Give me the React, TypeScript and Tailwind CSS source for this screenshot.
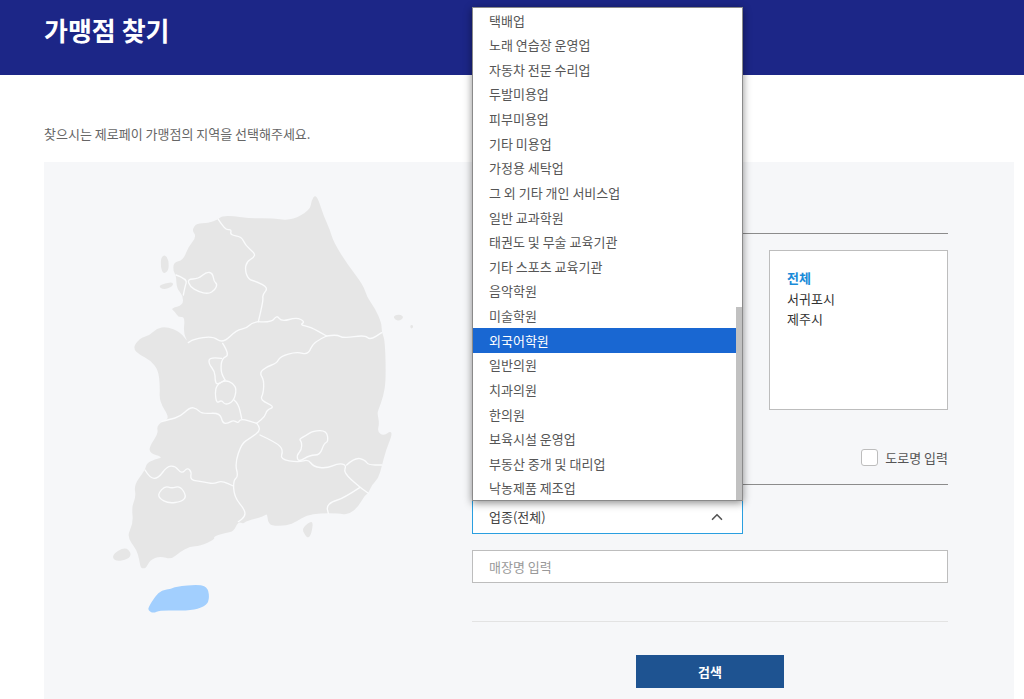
import React from 'react'
import { ChevronUp } from 'lucide-react'

const OPTIONS = [
  '택배업', '노래 연습장 운영업', '자동차 전문 수리업', '두발미용업', '피부미용업', '기타 미용업', '가정용 세탁업',
  '그 외 기타 개인 서비스업', '일반 교과학원', '태권도 및 무술 교육기관', '기타 스포츠 교육기관', '음악학원', '미술학원',
  '외국어학원', '일반의원', '치과의원', '한의원', '보육시설 운영업', '부동산 중개 및 대리업', '낙농제품 제조업',
]

type Pt = [number, number]

// rounds a list of points into a soft outline (midpoint quadratic)
function soft(pts: Pt[], closed = false) {
  if (!closed) {
    let d = `M${pts[0][0]} ${pts[0][1]}`
    for (let i = 1; i < pts.length - 1; i++) {
      const mx = (pts[i][0] + pts[i + 1][0]) / 2
      const my = (pts[i][1] + pts[i + 1][1]) / 2
      d += `Q${pts[i][0]} ${pts[i][1]} ${mx} ${my}`
    }
    const last = pts[pts.length - 1]
    return d + `L${last[0]} ${last[1]}`
  }
  const n = pts.length
  let d = `M${(pts[n - 1][0] + pts[0][0]) / 2} ${(pts[n - 1][1] + pts[0][1]) / 2}`
  for (let i = 0; i < n; i++) {
    const b = pts[(i + 1) % n]
    d += `Q${pts[i][0]} ${pts[i][1]} ${(pts[i][0] + b[0]) / 2} ${(pts[i][1] + b[1]) / 2}`
  }
  return d + 'Z'
}

// the lower half was measured from y=400, this moves it under the upper half
const low = (pts: Pt[]): Pt[] => pts.map(([x, y]) => [x, y + 660])

const LAND: Pt[] = [
  [635, 60], [645, 45], [655, 58], [670, 105], [690, 150], [700, 185], [740, 250], [790, 315], [800, 350], [825, 385],
  [845, 430], [845, 458], [855, 480], [858, 600], [850, 650], [835, 690],
  ...low([
    [832, 40], [838, 70], [832, 95], [850, 108], [872, 93], [876, 105], [858, 150], [845, 200], [835, 235], [815, 255],
    [805, 280], [795, 285], [775, 320], [745, 345], [715, 340], [660, 340], [620, 345], [590, 365], [560, 377], [515, 378],
    [503, 365], [502, 340], [490, 350], [440, 362], [430, 372], [415, 365], [400, 395], [375, 398], [340, 410], [345, 418],
    [300, 438], [270, 440], [240, 455], [215, 478], [180, 468], [150, 480], [138, 505], [122, 505], [118, 480], [110, 450],
    [80, 410], [100, 370], [95, 320], [108, 290], [102, 255], [135, 210], [140, 190], [165, 178], [190, 172], [150, 160],
    [148, 140], [175, 100], [170, 80], [185, 65], [210, 55], [178, 5],
  ]),
  [180, 620], [175, 570], [150, 540], [120, 525], [98, 505], [118, 475], [150, 465], [170, 445], [200, 440], [240, 455],
  [265, 488], [250, 460], [255, 410], [235, 412], [225, 395], [212, 385], [250, 375], [248, 345], [230, 325], [228, 285],
  [220, 275], [220, 248], [250, 240], [265, 200], [290, 170], [275, 150], [290, 130], [325, 130], [355, 118], [365, 108],
  [400, 108], [450, 115], [520, 115], [575, 122], [630, 90],
]

const BORDERS: Pt[][] = [
  [[355, 118], [375, 150], [395, 148], [390, 165], [425, 170], [435, 195], [465, 220], [462, 232], [440, 245], [435, 270], [445, 298], [470, 305], [505, 323], [487, 345], [490, 360], [475, 425]],
  [[228, 285], [262, 297], [255, 320], [250, 345]],
  [[475, 425], [455, 428], [440, 445], [410, 450], [368, 490], [338, 468], [280, 478], [265, 488]],
  [[368, 490], [390, 525], [365, 535], [362, 575], [375, 600]],
  [[365, 535], [330, 530], [325, 550], [345, 575], [345, 600], [350, 615], [375, 600]],
  [[475, 425], [515, 428], [530, 405], [545, 425], [590, 412], [615, 425], [600, 435], [630, 440], [680, 468]],
  [[680, 468], [710, 463], [730, 475], [795, 465], [810, 480], [845, 458]],
  [[680, 468], [640, 485], [625, 525], [590, 515], [540, 530], [530, 550], [500, 560], [478, 578], [492, 600], [490, 640], [480, 660], [525, 680], ...low([[500, 30], [495, 50], [470, 70]])],
  low([[185, 65], [210, 58], [240, 50], [270, 22], [290, 25], [305, 42], [360, 38], [368, 70], [385, 70], [400, 60], [415, 70], [422, 55], [470, 70]]),
  low([[402, 0], [415, 10], [425, 55]]),
  low([[470, 70], [487, 88], [450, 115], [425, 130], [405, 190], [415, 230], [400, 240], [402, 290], [435, 330], [435, 350], [415, 365]]),
  low([[135, 210], [150, 235], [175, 235], [200, 200], [225, 197], [245, 222], [262, 203], [275, 215], [270, 240], [310, 245], [340, 252], [365, 242], [400, 258]]),
  low([[480, 105], [530, 128], [550, 150], [540, 178], [595, 187], [625, 178], [640, 200], [680, 205], [715, 190], [740, 195], [730, 218], [780, 262], [805, 280]]),
  low([[740, 195], [765, 172], [795, 180], [805, 195], [845, 195]]),
  low([[780, 262], [730, 295], [695, 305], [680, 320], [685, 340]]),
]

const LOOPS: Pt[][] = [
  [[262, 297], [295, 297], [320, 275], [338, 280], [342, 305], [352, 312], [345, 330], [325, 342], [295, 335], [270, 320]],
  [[375, 600], [400, 610], [410, 630], [400, 665], [375, 675], [365, 660], [350, 670], [345, 640], [350, 615]],
  low([[175, 280], [195, 258], [215, 265], [240, 258], [260, 288], [245, 305], [205, 310], [178, 295]]),
  low([[597, 118], [615, 108], [640, 92], [680, 92], [685, 125], [672, 130], [660, 165], [630, 165], [595, 187], [590, 165], [605, 150], [605, 125]]),
]

const ISLANDS: Pt[][] = [
  [[183, 232], [195, 224], [206, 240], [206, 272], [190, 282], [182, 262]],
  [[175, 318], [195, 310], [220, 306], [218, 320], [190, 330]],
  [[880, 408], [900, 402], [912, 412], [898, 423], [884, 418]],
  [[930, 436], [938, 434], [940, 444], [932, 446]],
  low([[605, 385], [640, 358], [635, 400], [625, 415], [615, 405]]),
  low([[35, 465], [75, 440], [95, 460], [85, 478], [45, 485]]),
]

const JEJU: Pt[] = low([
  [145, 622], [165, 590], [185, 570], [215, 567], [225, 560], [300, 553], [325, 565], [328, 600], [315, 620], [270, 633],
  [180, 630], [160, 640], [145, 632],
])

function KoreaMap() {
  return (
    <svg viewBox="0 0 990 1350" className="w-[330px] h-[450px] shrink-0 ml-[56px] mt-[18px]">
      <path d={soft(LAND, true)} fill="#e6e6e6" />
      {ISLANDS.map((p, i) => <path key={i} d={soft(p, true)} fill="#e6e6e6" />)}
      <g fill="none" stroke="#fafbfc" strokeWidth="4" strokeLinejoin="round" strokeLinecap="round">
        {BORDERS.map((p, i) => <path key={i} d={soft(p)} />)}
        {LOOPS.map((p, i) => <path key={i} d={soft(p, true)} />)}
      </g>
      <path d={soft(JEJU, true)} fill="#a2cffe" />
    </svg>
  )
}

function IndustrySelect() {
  return (
    <div className="relative w-[271px] h-[33px]">
      <div className="absolute bottom-full left-0 w-[271px] h-[494px] bg-white border border-[#8a8a8a] shadow-[0_2px_8px_rgba(0,0,0,0.45)] overflow-hidden">
        {OPTIONS.map((o, i) => (
          <div
            key={o}
            className={`h-[24.63px] pl-4 flex items-center text-[13px] ${i === 13 ? 'bg-[#1967d2] text-white' : 'text-[#555555]'}`}
          >
            {o}
          </div>
        ))}
        <div className="absolute right-0 top-[299px] bottom-0 w-[6px] bg-[#c1c1c1]" />
      </div>
      <div className="h-full border border-t-0 border-[#2a9fe0] bg-white flex items-center justify-between pl-4 pr-[16px] text-[13px] text-[#444444]">
        <span>업종(전체)</span>
        <ChevronUp size={18} strokeWidth={2.2} className="text-[#555555]" />
      </div>
    </div>
  )
}

export default function App() {
  return (
    <div className="w-[1024px] h-[699px] overflow-hidden bg-white font-['Noto_Sans_CJK_KR','Liberation_Sans',sans-serif]">
      <div className="h-[75px] bg-[#1c2687] pl-11 pt-[11px]">
        <h1 className="text-[26px] leading-[38px] font-bold text-white">가맹점 찾기</h1>
      </div>
      <p className="mt-[49px] ml-11 text-[13px] leading-5 text-[#666666]">찾으시는 제로페이 가맹점의 지역을 선택해주세요.</p>
      <div className="mt-[18px] ml-11 w-[970px] h-[537px] bg-[#f6f7f9] flex">
        <KoreaMap />
        <div className="w-[476px] ml-[42px] pt-[71px]">
          <div className="h-px bg-[#8c8c8c]" />
          <div className="mt-4 flex justify-end">
            <ul className="w-[179px] h-[160px] border border-[#bdbdbd] bg-white pl-[17px] pt-[17px] text-[13px] leading-[20.5px] text-[#333333]">
              <li className="font-bold text-[#1a8bd8]">전체</li>
              <li>서귀포시</li>
              <li>제주시</li>
            </ul>
          </div>
          <div className="mt-[39px] h-[17px] flex items-center justify-end gap-[7px] text-[13px] text-[#555555]">
            <span className="w-[17px] h-[17px] rounded-[3px] border border-[#bdbdbd] bg-white" />
            <span>도로명 입력</span>
          </div>
          <div className="mt-[18px] h-px bg-[#8c8c8c]" />
          <div className="mt-4">
            <IndustrySelect />
          </div>
          <div className="mt-4 h-[33px] border border-[#bdbdbd] bg-white pl-4 flex items-center text-[13px] text-[#999999]">매장명 입력</div>
          <div className="mt-[38px] h-px bg-[#e3e3e3]" />
          <div className="mt-[33px] flex justify-center">
            <button className="w-[148px] h-[33px] bg-[#1e5391] text-white text-[13px] font-bold">검색</button>
          </div>
        </div>
      </div>
    </div>
  )
}
